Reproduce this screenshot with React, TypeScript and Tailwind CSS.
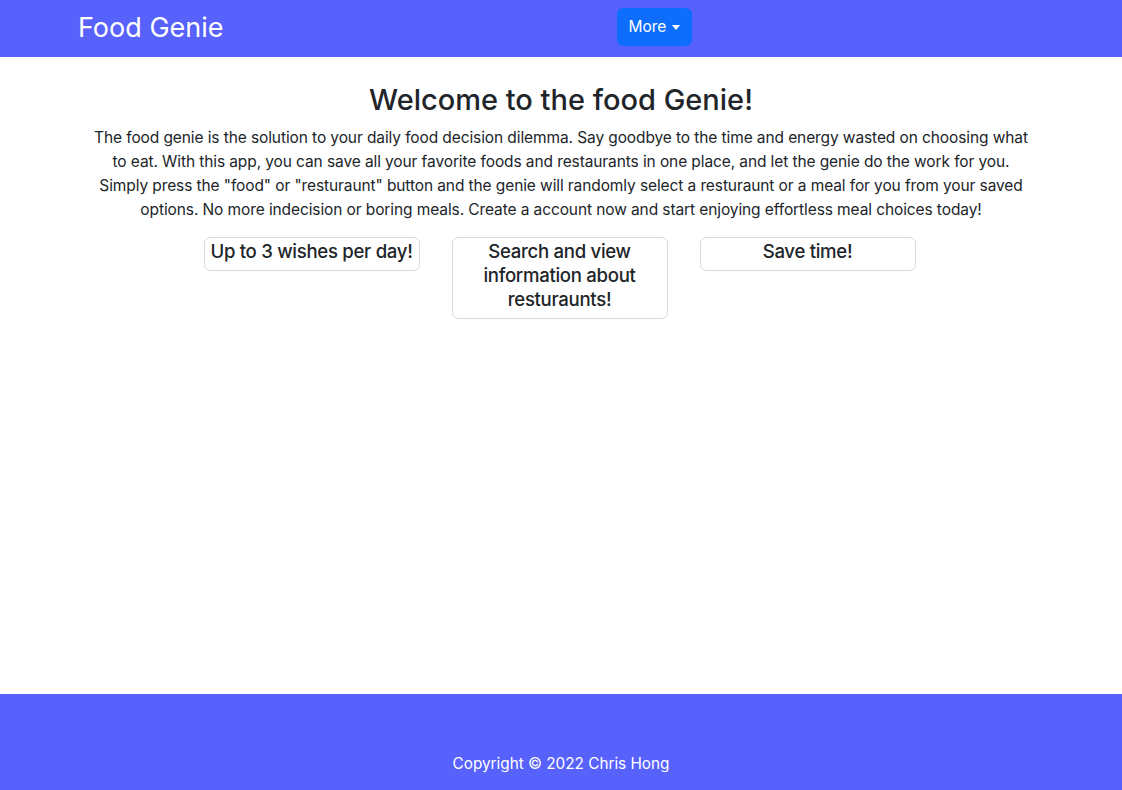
const features = ['Up to 3 wishes per day!', 'Search and view information about resturaunts!', 'Save time!']

const Navbar = () => {
  return (
    <nav className="h-[57px] bg-[#5762fd] flex items-center pb-[3px]">
      <div className="w-full flex items-center">
        <a href="#" className="ml-[78px] text-[27px] leading-none text-white">Food Genie</a>
        <div className="ml-[393px]">
          <button className="h-[38px] px-3 rounded-md bg-[#0d6efd] text-white text-[15.5px] flex items-center gap-[6px]">
            More
            <span className="w-0 h-0 border-x-[4px] border-x-transparent border-t-[5px] border-t-white"></span>
          </button>
        </div>
      </div>
    </nav>
  )
}

const Card = ({ text }: { text: string }) => {
  return (
    <div className="w-[216px] border border-[#d9d9d9] rounded-md pt-[1px] pb-[7px] text-center text-[18.6px] tracking-[-0.3px] leading-6 font-medium text-[#212529]">
      {text}
    </div>
  )
}

export default function App() {
  return (
    <div className="min-h-[790px] flex flex-col font-['Inter',sans-serif] text-[#212529]">
      <Navbar />
      <main className="flex-1">
        <div className="w-[940px] mx-auto text-center pt-[25px]">
          <h1 className="text-[29px] leading-[36px] font-medium mb-[8px]">Welcome to the food Genie!</h1>
          <p className="text-[15.5px] tracking-[-0.1px] leading-6">
            The food genie is the solution to your daily food decision dilemma. Say goodbye to the time and energy wasted on choosing what to eat. With this app, you can save all your favorite foods and restaurants in one place, and let the genie do the work for you. Simply press the "food" or "resturaunt" button and the genie will randomly select a resturaunt or a meal for you from your saved options. No more indecision or boring meals. Create a account now and start enjoying effortless meal choices today!
          </p>
        </div>
        <div className="flex justify-center items-start gap-8 mt-[15px] pr-[3px]">
          {features.map((f) => (
            <Card key={f} text={f} />
          ))}
        </div>
      </main>
      <footer className="h-[96px] bg-[#5762fd] text-white text-center pt-[59px] text-[15.3px]">
        Copyright © 2022 Chris Hong
      </footer>
    </div>
  )
}
